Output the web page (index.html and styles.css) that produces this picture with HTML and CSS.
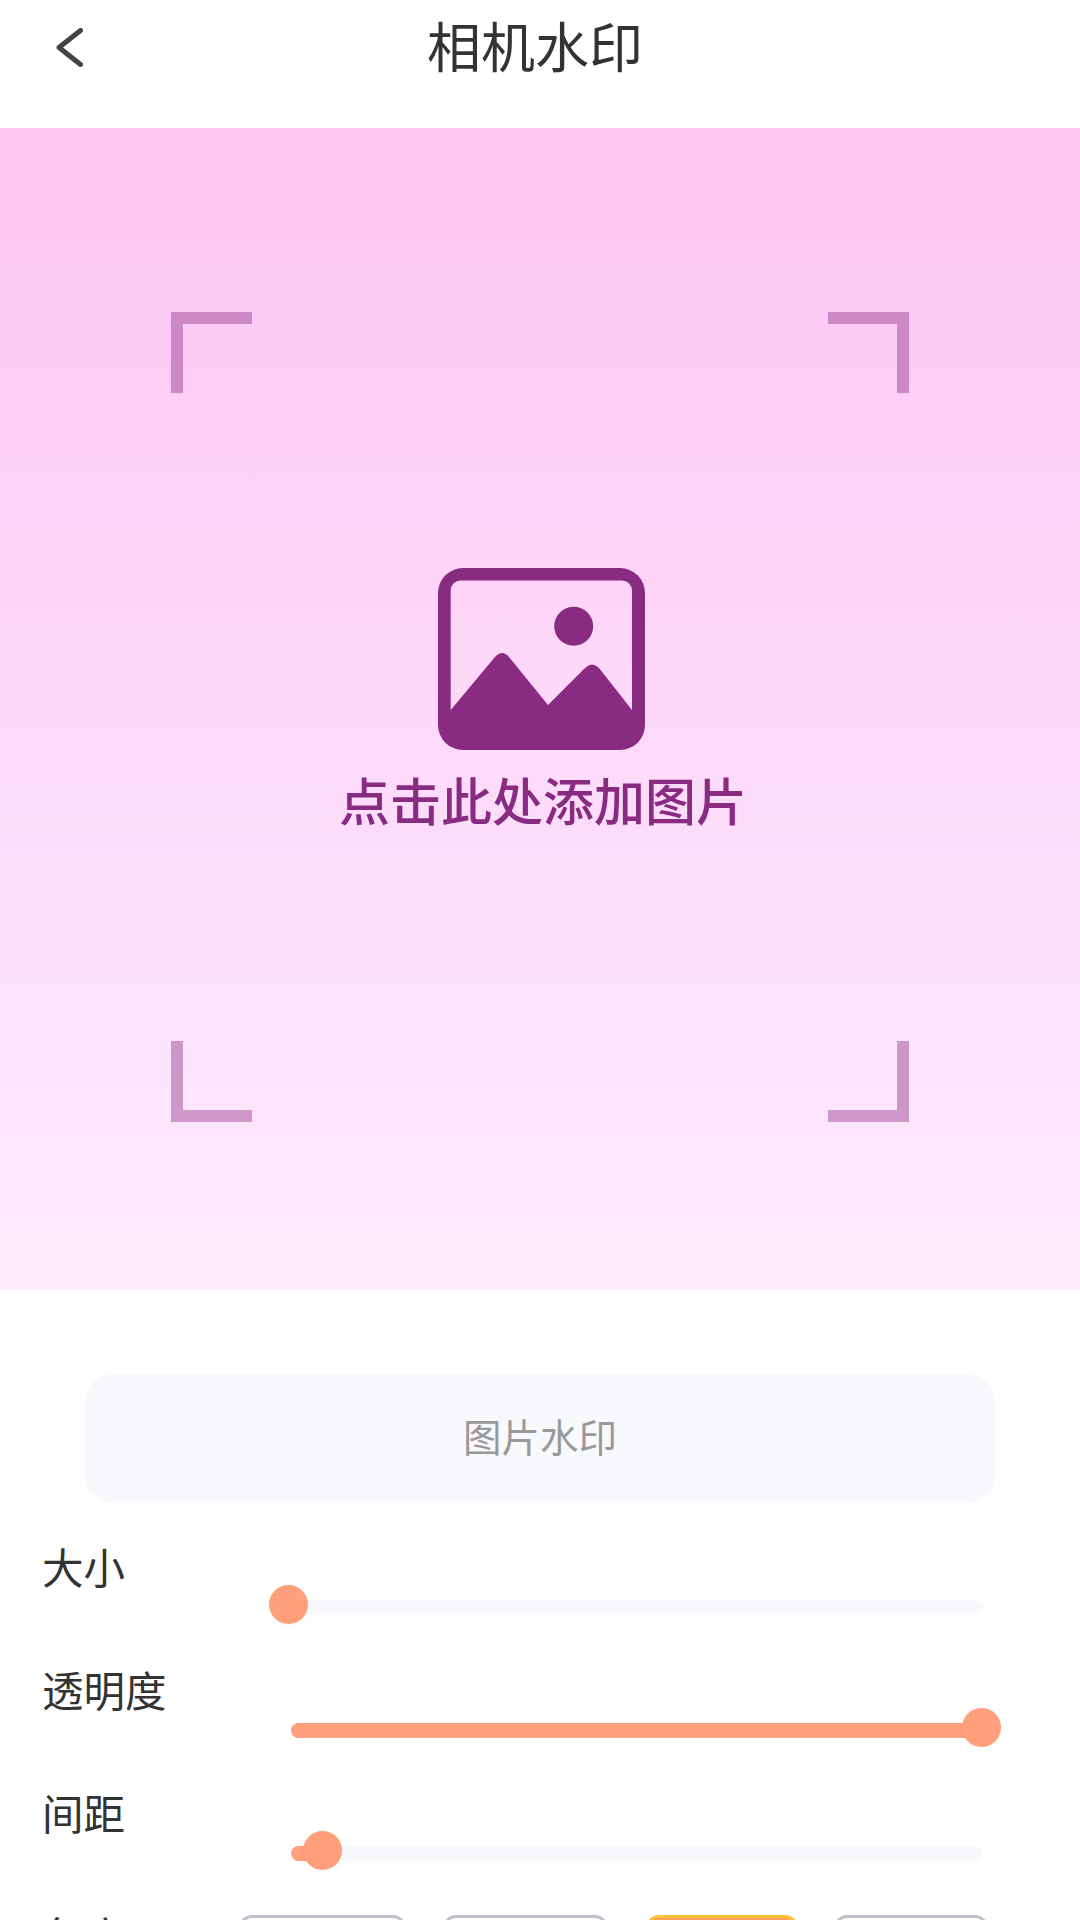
FILE: index.html
```html
<!DOCTYPE html>
<html lang="zh-CN">
<head>
<meta charset="utf-8">
<title>相机水印</title>
<link rel="stylesheet" href="styles.css">
</head>
<body>
<div class="page">
  <header class="topbar">
    <svg class="back" viewBox="0 0 27 39" aria-hidden="true"><path d="M24.5 2.5 L3 19.5 L24.5 36.5"/></svg>
    <h1 class="title">相机水印</h1>
  </header>

  <section class="hero">
    <div class="corner tl"></div>
    <div class="corner-gap"></div>
    <div class="corner tr"></div>
    <div class="hero-center">
      <svg class="pic" viewBox="0 0 207 182" aria-hidden="true">
        <path fill-rule="evenodd" d="M25 0H182a25 25 0 0 1 25 25V157a25 25 0 0 1-25 25H25a25 25 0 0 1-25-25V25A25 25 0 0 1 25 0ZM23 12.5A10 10 0 0 0 12.7 22.5V142L57 89Q64 81 71 89L110 137L147 100Q154 93 161 100L194 142V22.5A10 10 0 0 0 184 12.5Z"/>
        <circle cx="135.7" cy="58.3" r="19.5"/>
      </svg>
      <p class="hint">点击此处添加图片</p>
    </div>
    <div class="corner bl"></div>
    <div class="corner-gap"></div>
    <div class="corner br"></div>
  </section>

  <div class="tab">图片水印</div>

  <section class="controls">
    <div class="row">
      <div class="label">大小</div>
      <div class="track">
        <div class="fill" style="width:0"></div>
        <div class="thumb" style="left:-22px"></div>
      </div>
    </div>
    <div class="row">
      <div class="label">透明度</div>
      <div class="track">
        <div class="fill" style="width:100%"></div>
        <div class="thumb" style="left:671px"></div>
      </div>
    </div>
    <div class="row">
      <div class="label">间距</div>
      <div class="track">
        <div class="fill" style="width:30px"></div>
        <div class="thumb" style="left:12px"></div>
      </div>
    </div>
    <div class="row chips-row">
      <div class="label chips-label">角度</div>
      <div class="chip w1"></div>
      <div class="chip w2"></div>
      <div class="chip w3 active"></div>
      <div class="chip w4"></div>
    </div>
  </section>
</div>
</body>
</html>
```
FILE: styles.css
```css
* { box-sizing: border-box; }
html, body { margin: 0; padding: 0; height: 1920px; overflow: hidden; background: #fff; }
body { font-family: "Noto Sans CJK SC", "Noto Sans", sans-serif; color: #333; }
.page { width: 1080px; height: 1920px; overflow: hidden; }

.topbar { display: flex; align-items: flex-start; height: 128px; padding: 0 93px 0 56px; }
.back { width: 27px; height: 39px; margin-top: 28px; flex: none; }
.back path { fill: none; stroke: #444; stroke-width: 5; stroke-linecap: round; stroke-linejoin: round; }
.title { flex: 1; margin: 16px 0 0; font-size: 54px; line-height: 58px; font-weight: 400; text-align: center; color: #333; }

.hero {
  display: grid;
  grid-template-columns: 81px 1fr 81px;
  grid-template-rows: 81px 648px 81px;
  height: 1162px;
  padding: 184px 171px 168px;
  background: linear-gradient(180deg, #fec5f5 0%, #fdecfe 100%);
}
.corner { border: 0 solid rgba(138, 43, 130, 0.42); }
.tl { border-width: 12px 0 0 12px; }
.tr { border-width: 12px 12px 0 0; }
.bl { border-width: 0 0 12px 12px; }
.br { border-width: 0 12px 12px 0; }
.hero-center { grid-column: 1 / 4; display: flex; flex-direction: column; align-items: center; padding: 175px 0 0 3px; }
.pic { width: 207px; height: 182px; fill: #8a2b82; display: block; }
.hint { margin: 24px 0 0 3px; font-size: 51px; line-height: 51px; font-weight: 500; color: #8a2b82; white-space: nowrap; }

.tab {
  width: 912px; height: 129px; margin: 84px 0 0 84px; padding-bottom: 7px;
  display: flex; align-items: center; justify-content: center;
  border-radius: 30px; background: #f8f9fc;
  font-size: 38.5px; color: #999;
}

.controls { padding: 42px 0 0 42px; display: flex; flex-direction: column; gap: 53px; }
.label { font-size: 41.5px; line-height: 42px; color: #333; }
.track { position: relative; width: 692px; height: 15px; margin: 13px 0 0 249px; border-radius: 8px; background: #f8f9fc; }
.fill { height: 100%; border-radius: 8px; background: #ff9f7c; }
.thumb { position: absolute; top: -15px; width: 39px; height: 39px; border-radius: 50%; background: #ff9f7c; box-shadow: 0 1px 8px rgba(0, 0, 0, 0.04); }

.chips-row { display: flex; align-items: flex-start; }
.chips-label { width: 197px; flex: none; }
.chip { height: 60px; margin-top: 1px; border: 3px solid #bfc2cb; border-radius: 13px; background: #fff; flex: none; }
.w1 { width: 167px; }
.w2 { width: 165px; margin-left: 37px; }
.w3 { width: 152px; margin-left: 38px; }
.w4 { width: 154px; margin-left: 36px; }
.active { border-color: #ffc233; background: #ff9f5c; }
```
